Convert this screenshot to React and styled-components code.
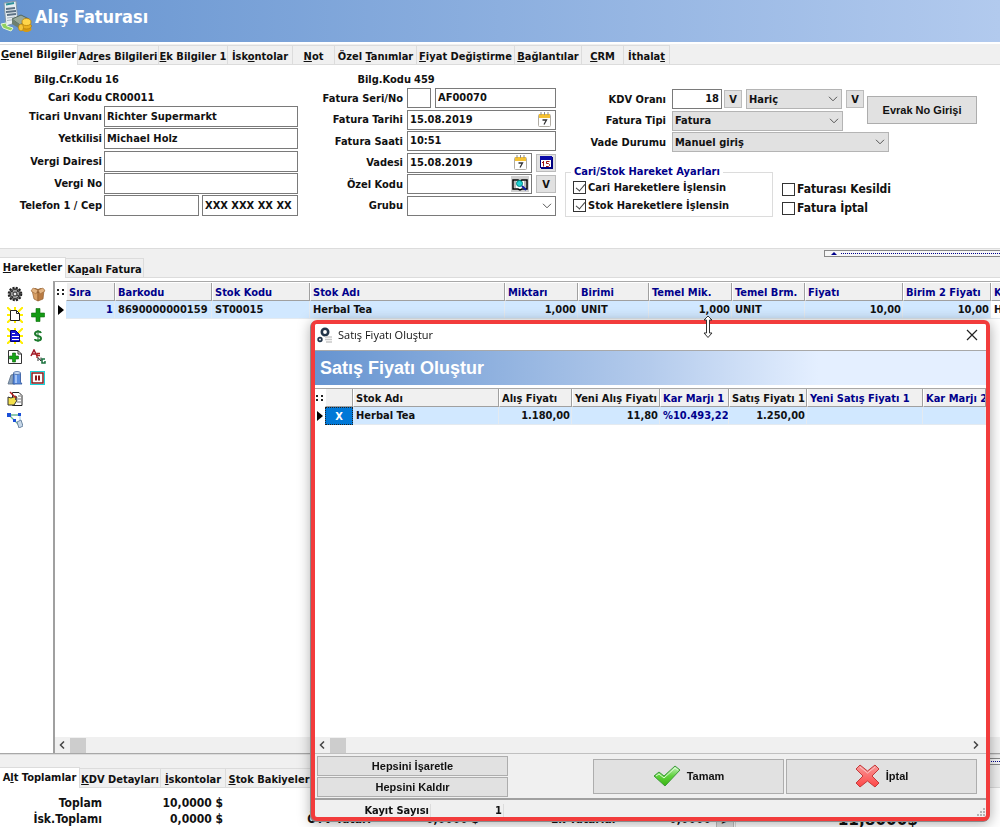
// Purchase invoice screen with the sale price dialog
import React, { useState } from "react";
import styled, { createGlobalStyle } from "styled-components";

const GlobalStyle = createGlobalStyle`
  * {
    box-sizing: border-box;
  }

  body {
    margin: 0;
    background: #f0f0f0;
  }

  body,
  button,
  input,
  select {
    font-family: "DejaVu Sans Condensed", "DejaVu Sans", sans-serif;
    font-size: 11px;
    font-weight: bold;
    color: #111;
  }
`;

const Shell = styled.div`
  display: flex;
  flex-direction: column;
  height: 100vh;
  overflow: hidden;
`;

const Header = styled.header`
  display: flex;
  align-items: flex-start;
  flex: 0 0 44px;
  gap: 2px;
  background: linear-gradient(to right, #6694d0, #b2caee);
  border-bottom: 2px solid #fff;
`;

const PageTitle = styled.h1`
  margin: 0;
  font-size: 18px;
  line-height: 34px;
  color: #fff;
`;

const TabBar = styled.div`
  display: flex;
  align-items: flex-end;
  flex: 0 0 auto;
  height: 21px;
  background: #f0f0f0;
  border-bottom: 1px solid #dcdcdc;
`;

const TabButton = styled.button`
  width: ${(props) => props.$width}px;
  height: ${(props) => (props.$active ? 21 : 19)}px;
  margin-bottom: ${(props) => (props.$active ? -1 : 0)}px;
  padding: ${(props) => (props.$active ? "0 0 1px" : "2px 0 0")};
  border: 1px solid #dcdcdc;
  border-width: 1px 1px 0 0;
  background: ${(props) => (props.$active ? "#fff" : "#f0f0f0")};
  white-space: nowrap;
  display: flex;
  justify-content: center;
  align-items: center;

  u {
    text-underline-offset: 1px;
  }
`;

const FormPanel = styled.section`
  display: flex;
  align-items: flex-start;
  flex: 0 0 183px;
  padding-top: 5px;
  background: #fff;
`;

const FieldColumn = styled.div`
  display: flex;
  flex-direction: column;
  width: ${(props) => props.$width}px;
`;

const FieldStack = styled.div`
  display: flex;
  flex-direction: column;
  justify-content: space-between;
  height: ${(props) => props.$height}px;
`;

const FieldRow = styled.div`
  display: grid;
  grid-template-columns: ${(props) => props.$label}px auto;
  column-gap: ${(props) => props.$gap || 3}px;
  align-items: center;
  min-height: 18px;
`;

const FieldLabel = styled.label`
  text-align: right;
  white-space: nowrap;
`;

const Controls = styled.div`
  display: flex;
  align-items: center;
  gap: ${(props) => props.$gap || 4}px;
`;

const TextBox = styled.input`
  width: ${(props) => props.$width}px;
  height: ${(props) => props.$height || 20}px;
  padding: 0 2px 1px;
  border: 1px solid #7a7a7a;
  border-radius: 0;
  background: #fff;
  text-align: ${(props) => props.$align || "left"};
  outline: none;
`;

const IconField = styled.div`
  display: flex;
  align-items: center;
  width: ${(props) => props.$width}px;
  height: 20px;
  padding-right: 2px;
  border: 1px solid #7a7a7a;
  background: #fff;

  input {
    flex: 1;
    min-width: 0;
    padding: 0 2px 1px;
    border: none;
    background: none;
    outline: none;
  }
`;

const IconButton = styled.button`
  display: flex;
  align-items: center;
  justify-content: center;
  width: 18px;
  height: 16px;
  padding: 0;
  border: none;
  background: ${(props) => (props.$filled ? "#d0d0d0" : "none")};
`;

const SmallButton = styled.button`
  display: flex;
  align-items: center;
  justify-content: center;
  width: ${(props) => props.$width || 18}px;
  height: 18px;
  padding: 0;
  border: 1px solid #bcbcbc;
  background: #e1e1e1;
`;

const SelectWrap = styled.div`
  position: relative;
  width: ${(props) => props.$width}px;
  height: 20px;

  select {
    width: 100%;
    height: 100%;
    padding: 0 2px;
    appearance: none;
    border: 1px solid ${(props) => (props.$light ? "#7a7a7a" : "#b4b4b4")};
    border-radius: 0;
    background: ${(props) => (props.$light ? "#fff" : "#e1e1e1")};
    outline: none;
  }

  svg {
    position: absolute;
    right: 4px;
    top: 7px;
    pointer-events: none;
  }
`;

const OptionsColumn = styled.div`
  display: flex;
  flex-direction: column;
  gap: 14px;
  padding-top: 19px;
  margin-left: 9px;
`;

const DocArea = styled.div`
  margin-left: -24px;
  padding-top: 26px;
`;

const DocButton = styled.button`
  width: 110px;
  height: 28px;
  padding: 0;
  border: 1px solid #adadad;
  background: #e1e1e1;
  font-family: "Liberation Sans", Arial, sans-serif;
`;

const CheckArea = styled.div`
  display: flex;
  gap: 9px;
`;

const CheckGroup = styled.fieldset`
  display: flex;
  flex-direction: column;
  gap: 4px;
  width: 208px;
  margin: 0;
  padding: 2px 7px 4px;
  border: 1px solid #dcdcdc;

  legend {
    margin-left: -2px;
    padding: 0 3px;
    color: #00008b;
    line-height: 12px;
  }
`;

const LooseChecks = styled.div`
  display: flex;
  flex-direction: column;
  gap: 5px;
  padding-top: 16px;
`;

const CheckLabel = styled.label`
  display: flex;
  align-items: center;
  gap: 2px;
  height: 14px;
  font-size: ${(props) => (props.$large ? 12 : 11)}px;
  white-space: nowrap;

  input {
    position: relative;
    width: 13px;
    height: 13px;
    margin: 0;
    appearance: none;
    border: 1px solid #333;
    background: #fff;
  }

  input:checked::after {
    content: "";
    position: absolute;
    left: 4px;
    top: 0;
    width: 4px;
    height: 8px;
    border: solid #444;
    border-width: 0 1px 1px 0;
    transform: rotate(40deg);
  }
`;

const SplitBar = styled.div`
  display: flex;
  justify-content: flex-end;
  flex: 0 0 ${(props) => props.$height}px;
  padding-top: ${(props) => props.$top}px;
  background: #f0f0f0;
  border-top: 1px solid #dcdcdc;
`;

const SplitHandle = styled.div`
  display: flex;
  align-items: center;
  gap: 4px;
  width: 176px;
  height: 7px;
  padding-left: 6px;
  border: 1px solid #888;
  border-right: none;
  background: #f6f6f6;

  &::before {
    content: "";
    border: 3px solid transparent;
    border-top: none;
    border-bottom-color: #00008b;
  }

  &::after {
    content: "";
    flex: 1;
    border-top: 1px dotted #00008b;
  }
`;

const WorkArea = styled.main`
  display: flex;
  flex: 1;
  min-height: 0;
  padding-top: 3px;
  background: #fff;
  border-bottom: 1px solid #a8a8a8;
`;

const ToolPalette = styled.div`
  display: grid;
  grid-template-columns: 16px 16px;
  grid-auto-rows: 16px;
  grid-auto-flow: row;
  align-content: start;
  gap: 5px 7px;
  flex: 0 0 53px;
  padding: 5px 0 0 7px;
`;

const ToolButton = styled.button`
  grid-column: ${(props) => props.$col};
  display: flex;
  width: 16px;
  height: 16px;
  padding: 0;
  border: none;
  background: none;
`;

const GridPane = styled.div`
  display: flex;
  flex-direction: column;
  flex: 1;
  min-width: 0;
  padding-top: ${(props) => (props.$framed ? 1 : 0)}px;
  border-top: 1px solid #a8a8a8;
  border-left: ${(props) => (props.$framed ? "2px solid #a0a0a0" : "none")};
  background: #fff;
`;

const GridScroll = styled.div`
  flex: 1;
  min-height: 0;
  overflow: hidden;
`;

const DataTable = styled.table`
  width: 100%;
  min-width: ${(props) => props.$minWidth}px;
  table-layout: fixed;
  border-collapse: separate;
  border-spacing: 0;
`;

const HeadCell = styled.th`
  height: 18px;
  padding: 1px 2px 0;
  overflow: hidden;
  background: #f0f0f0;
  border-right: 1px solid #a0a0a0;
  border-bottom: 1px solid #a0a0a0;
  border-left: 1px solid #fff;
  color: ${(props) => (props.$navy ? "#00008b" : "#111")};
  text-align: left;
  white-space: nowrap;
`;

const MarkerCell = styled.td`
  height: 18px;
  padding: 0;
  background: #fff;
  line-height: 0;
  text-align: center;
`;

const BodyCell = styled.td`
  height: 18px;
  padding: 0 1px 0 3px;
  overflow: hidden;
  background: ${(props) => (props.$plain ? "#fff" : "#d1e8ff")};
  border-right: 1px solid #e4eaf0;
  border-bottom: 1px solid #e4eaf0;
  color: ${(props) => (props.$navy ? "#00008b" : "#111")};
  text-align: ${(props) => props.$align || "left"};
  white-space: nowrap;
`;

const MarkCell = styled(BodyCell)`
  padding: 0;
  background: #0078d7;
  border: 1px dotted #222;
  color: #fff;
  text-align: center;
`;

const ScrollBar = styled.div`
  display: flex;
  align-items: center;
  flex: 0 0 16px;
  padding: 0 7px 0 4px;
  background: #f0f0f0;
`;

const ScrollThumb = styled.div`
  width: 16px;
  height: 15px;
  margin: 0 auto 0 5px;
  background: #cdcdcd;
`;

const Footer = styled.footer`
  display: flex;
  flex-direction: column;
  flex: 0 0 73px;
  overflow: hidden;
`;

const Totals = styled.div`
  display: grid;
  grid-template-columns: 102px 121px 148px 108px 138px 94px 24px 1fr;
  grid-auto-rows: 16px;
  flex: 1;
  padding-top: 7px;
  background: #fff;
  font-size: 12px;
  line-height: 16px;
  text-align: right;
  white-space: nowrap;
`;

const TotalValue = styled.output`
  grid-column: ${(props) => props.$col};
`;

const TotalName = styled.span`
  grid-column: ${(props) => props.$col};
`;

const MoreButton = styled(SmallButton)`
  margin-left: 5px;
`;

const GrandTotal = styled.output`
  padding-right: 82px;
  border-left: 1px solid #dcdcdc;
  font-size: 17px;
  line-height: 16px;
`;

const Dialog = styled.div`
  position: fixed;
  left: 311px;
  right: 10px;
  top: 320px;
  bottom: 6px;
  display: flex;
  flex-direction: column;
  overflow: hidden;
  border: 4px solid #f23c3c;
  border-radius: 6px;
  background: #f0f0f0;
  box-shadow: -1px 1px 0 #8a8a8a, 0 2px 14px rgba(0, 0, 0, 0.35);
`;

const DialogTitle = styled.div`
  display: flex;
  align-items: center;
  flex: 0 0 27px;
  gap: 5px;
  padding: 0 8px 5px 2px;
  background: #fff;
  border-bottom: 1px solid #a8a8a8;
  font-family: "Open Sans", "Noto Sans", sans-serif;
  font-weight: normal;
  font-size: 11px;
`;

const CloseButton = styled.button`
  display: flex;
  margin-left: auto;
  padding: 0;
  border: none;
  background: none;
`;

const Banner = styled.h2`
  flex: 0 0 36px;
  margin: 0;
  padding-left: 5px;
  background: linear-gradient(to right, #6694d0, #b4cbec 50%, #e4efff 75%);
  border-bottom: 3px solid #fff;
  color: #fff;
  font-family: "Liberation Sans", Arial, sans-serif;
  font-size: 18px;
  line-height: 34px;
`;

const ActionBar = styled.div`
  display: flex;
  align-items: center;
  justify-content: space-between;
  flex: 0 0 47px;
  padding: 0 9px 0 2px;
  border-top: 1px solid #c0c0c0;
  border-bottom: 2px solid #a0a0a0;
`;

const ButtonStack = styled.div`
  display: flex;
  flex-direction: column;
  gap: 1px;
`;

const ButtonPair = styled.div`
  display: flex;
  gap: 2px;
`;

const PushButton = styled.button`
  display: flex;
  align-items: center;
  justify-content: center;
  gap: 6px;
  width: 191px;
  height: ${(props) => props.$height}px;
  padding: 0;
  border: 1px solid #adadad;
  background: #e1e1e1;
  font-family: "Liberation Sans", Arial, sans-serif;
`;

const StatusBar = styled.div`
  display: flex;
  align-items: flex-end;
  flex: 0 0 17px;
`;

const StatusCell = styled.div`
  width: ${(props) => props.$width}px;
  padding-right: 1px;
  border-right: 1px solid #dcdcdc;
  line-height: 13px;
  text-align: right;
`;

const Grip = styled.svg`
  margin-left: auto;
`;

const ResizeCursor = styled.svg`
  position: fixed;
  left: 702px;
  top: 315px;
`;

const Chevron = () => (
  <svg width="10" height="6" viewBox="0 0 10 6" fill="none" stroke="#555">
    <path d="M1 .8 5 4.8 9 .8" />
  </svg>
);

const CalendarIcon = () => (
  <svg width="13" height="15" viewBox="0 0 13 15">
    <rect x=".5" y="2.5" width="12" height="12" rx="1" fill="#fff" stroke="#b0aca4" />
    <path d="M1 2h11v4H1z" fill="#f5c132" />
    <path d="M3 0v3M6.500 0v3M10 0v3" stroke="#8a8a8a" />
    <path d="M4.500 8h4L6 12.500" fill="none" stroke="#333" strokeWidth="1.300" />
  </svg>
);

const DueIcon = () => (
  <svg width="13" height="13" viewBox="0 0 13 13">
    <path d="M1 1h12v12H1z" fill="#000080" />
    <rect x=".5" y=".5" width="11" height="11" fill="#fff" stroke="#000080" />
    <path d="M0 0h12v4H0z" fill="#0a0aa8" />
    <path d="M3.500 5v5.500M2 6.500h1.500M9.500 5.500H6.500v2h2l1 1v1l-1 1H6" fill="none" stroke="#a01010" />
  </svg>
);

const LookupIcon = () => (
  <svg width="16" height="13" viewBox="0 0 16 13">
    <path d="M1 2h5l2 1 2-1h5v9h-5l-2 1-2-1H1z" fill="#fff" stroke="#000" strokeWidth="1.500" />
    <path d="M3 3v7M13 3v7" stroke="#777" />
    <circle cx="7.500" cy="5.500" r="3" fill="#1fd0d8" stroke="#087" />
    <path d="m10 8 4 4" stroke="#1020a0" strokeWidth="2" />
  </svg>
);

const InvoiceLogo = () => (
  <svg width="33" height="33" viewBox="0 0 33 33">
    <path d="m4 3 12-2 2 21-12 4z" fill="#e6eef2" stroke="#8397a8" />
    <path d="m6 4.500 8-1.500" stroke="#2d8f9a" strokeWidth="2" />
    <path d="m6 9 9-1M6 12l10-1M7 15l9-1" stroke="#5c7184" strokeWidth="2" />
    <path d="m7 18 8-1M7 20.500l8-1" stroke="#a7b4bd" />
    <path d="m12 19 9-4 8 4-9 6z" fill="#98a99a" stroke="#53665a" />
    <path d="m12 19 8 6v4l-8-5z" fill="#6c8070" />
    <path d="m1 24 5-1 1 3 6 2-2 3-8-3z" fill="#8fd160" stroke="#e6f7d6" />
    <ellipse cx="26.500" cy="29" rx="5" ry="3" fill="#d89a10" />
    <ellipse cx="26.500" cy="26" rx="5" ry="3" fill="#eab020" stroke="#a87508" strokeWidth=".6" />
    <ellipse cx="26.500" cy="22" rx="4.500" ry="3.500" fill="#ffd54a" stroke="#b98308" strokeWidth=".8" />
    <ellipse cx="21" cy="27.500" rx="2.500" ry="3.500" fill="#f5c438" stroke="#a87508" strokeWidth=".6" />
  </svg>
);

const GearsIcon = () => (
  <svg width="16" height="16" viewBox="0 0 16 16">
    <circle cx="8" cy="5" r="3.200" fill="none" stroke="#22354a" strokeWidth="2.600" />
    <circle cx="3" cy="12.500" r="1.800" fill="none" stroke="#22354a" strokeWidth="1.800" />
    <path d="M8 10h7M8 12.500h7M9 15h6" stroke="#c9c9c9" strokeWidth="1.500" />
  </svg>
);

const CheckIcon = () => (
  <svg width="28" height="22" viewBox="0 0 28 22">
    <defs>
      <linearGradient id="okFill" x1="0" y1="0" x2="0" y2="1">
        <stop offset="0" stopColor="#c9f3c4" />
        <stop offset=".5" stopColor="#5fd23c" />
        <stop offset="1" stopColor="#39b410" />
      </linearGradient>
    </defs>
    <path d="m1 11 5-4 5 4L22 1l5 4-15 16z" fill="url(#okFill)" stroke="#3d9b3a" strokeLinejoin="round" />
    <path d="m3 11 3-2 5 4L22 3l3 2" fill="none" stroke="#dcfad2" />
  </svg>
);

const CancelIcon = () => (
  <svg width="25" height="24" viewBox="0 0 25 24">
    <defs>
      <linearGradient id="noFill" x1="0" y1="0" x2="0" y2="1">
        <stop offset="0" stopColor="#f79a9a" />
        <stop offset="1" stopColor="#ff4545" />
      </linearGradient>
    </defs>
    <path
      d="m5 1 7.500 6L20 1l4 4-7 7 7 7-4 4-7.500-6L5 23l-4-4 7-7-7-7z"
      fill="url(#noFill)"
      stroke="#c43a3a"
      strokeLinejoin="round"
    />
    <path d="m5 3 7.500 6L20 3" fill="none" stroke="#fcc4c4" />
  </svg>
);

const SunRays = () => (
  <path
    d="M0 0l5 5M16 0l-5 5M0 16l5-5M16 16l-5-5M0 8h4M16 8h-4M8 0v3M8 16v-2"
    stroke="#ffee00"
    strokeWidth="2"
  />
);

const toolDrawings = {
  gear: (
    <>
      <circle cx="8" cy="8" r="6.300" fill="#777" stroke="#222" strokeWidth="2" strokeDasharray="2 1.300" />
      <circle cx="8" cy="8" r="4.500" fill="#a9a9a9" stroke="#333" />
      <circle cx="8" cy="8" r="2" fill="#eee" stroke="#222" />
      <path d="m4 5 2 1M11 4l-1 2M12 10l-2-1M5 12l1-2" stroke="#222" />
    </>
  ),
  box: (
    <>
      <path d="m2 4 6 2v9l-4-2z" fill="#d9a066" stroke="#94602f" strokeWidth=".7" />
      <path d="m14 4-6 2v9l5-2z" fill="#b97b43" stroke="#94602f" strokeWidth=".7" />
      <path d="m2 4 3-2 3 1 3-1 4 2-7 3z" fill="#8e5a2b" />
      <path d="m1 5 2-3 5 2-2 4zM15 5l-2-3-5 2 2 4z" fill="#e3b482" stroke="#a06c3a" strokeWidth=".6" />
    </>
  ),
  newPage: (
    <>
      <SunRays />
      <path d="M3.500 3.500h6l3 3v7h-9z" fill="#fff" stroke="#222" />
      <path d="M9.500 3.500v3h3" fill="none" stroke="#222" />
    </>
  ),
  plus: <path d="M6 1.500h4V6h4.500v4H10v4.500H6V10H1.500V6H6z" fill="#149a14" stroke="#0a6d0a" strokeWidth=".6" />,
  bluePage: (
    <>
      <SunRays />
      <path d="M3.500 2.500h5l4 4v7h-9z" fill="#1818d8" stroke="#000070" />
      <path d="M5 5.500h3M5 8.500h7M5 11.500h7" stroke="#fff" />
    </>
  ),
  dollar: (
    <>
      <path
        d="M11 5Q10.500 3.500 8 3.500T5 5.500Q5 7.500 8 8t3 2.500Q11 12.500 8 12.500T5 11"
        fill="none"
        stroke="#1c7a2c"
        strokeWidth="2"
      />
      <path d="M8 2v12" stroke="#1c7a2c" />
    </>
  ),
  addPage: (
    <>
      <path d="M1.500 1.500H11L14.500 5v9.500h-13z" fill="#fff" stroke="#333" />
      <path d="M11 1.500V5h3.500" fill="none" stroke="#333" />
      <path d="M5.500 4h3v3h3v3h-3v3h-3v-3h-3V7h3z" fill="#16a516" stroke="#0a600a" strokeWidth=".6" />
    </>
  ),
  letters: (
    <>
      <path d="m1 7 3-6 3 6M2 5h4" fill="none" stroke="#a01828" strokeWidth="1.500" />
      <path d="M7 9V4.500h3M7 6.500h3" fill="none" stroke="#b02020" strokeWidth="1.300" />
      <path d="M8 12V8.500l3 3.500V8.500" fill="none" stroke="#303030" />
      <path d="M15 10h-3v4h3v-2" fill="none" stroke="#18703c" strokeWidth="1.500" />
    </>
  ),
  barrel: (
    <>
      <path d="m1 14 3-9 4-1v10z" fill="#8ea2b8" stroke="#5c6f85" strokeWidth=".8" />
      <path d="M6.500 3h7v9l1.500 2H6z" fill="#5d8fe0" stroke="#2d539b" strokeWidth=".8" />
      <ellipse cx="10" cy="3" rx="3.500" ry="1.500" fill="#cfe0f7" stroke="#4868a0" strokeWidth=".8" />
      <path d="M9 5v8" stroke="#bdd5fb" strokeWidth="1.500" />
    </>
  ),
  pause: (
    <>
      <rect x=".5" y="1.500" width="14" height="13" fill="#fff" stroke="#19d3dc" />
      <rect x="2" y="3" width="11" height="10" fill="#fff" stroke="#8b1a1a" strokeWidth="1.500" />
      <path d="M6 5.500v5M9 5.500v5" stroke="#8b1a1a" strokeWidth="2" />
    </>
  ),
  edit: (
    <>
      <path d="M5.500 1.500H12l3 3v10H5.500z" fill="#fff" stroke="#222" />
      <path d="M11 5h3M10 8h4M10 11h4" stroke="#777" />
      <path d="m1 6 3 1 5-2 1 2-2 1 2 1-1 2-2 3H1z" fill="#f3e04c" stroke="#333" />
      <path d="m3 1 6 6" stroke="#b82020" strokeWidth="1.500" />
    </>
  ),
  nodes: (
    <>
      <path d="M2 3h11M2 3l10 10" fill="none" stroke="#69b993" strokeWidth="1.300" />
      <path d="M13 3v6" stroke="#9ccbe8" />
      <path d="M0 1h4v4H0zM11 1h3v3h-3zM6 7h3v3H6z" fill="#1a4fd8" />
      <path d="m10 10 4-2 2 6-4 2z" fill="#c7d7e8" stroke="#6d87a3" />
    </>
  ),
};

const tools = [
  { icon: "gear", name: "Ayarlar", col: 1 },
  { icon: "box", name: "Stok", col: 2 },
  { icon: "newPage", name: "Yeni", col: 1 },
  { icon: "plus", name: "Ekle", col: 2 },
  { icon: "bluePage", name: "Liste", col: 1 },
  { icon: "dollar", name: "Fiyat", col: 2 },
  { icon: "addPage", name: "Sayfa Ekle", col: 1 },
  { icon: "letters", name: "Yazı", col: 2 },
  { icon: "barrel", name: "Depo", col: 1 },
  { icon: "pause", name: "Beklet", col: 2 },
  { icon: "edit", name: "Düzenle", col: 1 },
  { icon: "nodes", name: "Hareket", col: 1 },
];

// "_" stands before the shortcut letter
const mainTabs = [
  ["_Genel Bilgiler", 78],
  ["Ad_res Bilgileri", 81],
  ["_Ek Bilgiler 1", 69],
  ["İsk_ontolar", 65],
  ["_Not", 42],
  ["Özel _Tanımlar", 82],
  ["_Fiyat Değiştirme", 98],
  ["_Bağlantılar", 67],
  ["_CRM", 42],
  ["İthala_t", 46],
];

const movementTabs = [
  ["_Hareketler", 66],
  ["Ka_palı Fatura", 78],
];

const totalTabs = [
  ["A_lt Toplamlar", 80],
  ["_KDV Detayları", 81],
  ["_İskontolar", 65],
  ["_Stok Bakiyeler", 87],
];

const lineColumns = [
  { title: "Sıra", width: 49, value: "1", align: "right", navy: true },
  { title: "Barkodu", width: 97, value: "8690000000159" },
  { title: "Stok Kodu", width: 98, value: "ST00015" },
  { title: "Stok Adı", width: 195, value: "Herbal Tea" },
  { title: "Miktarı", width: 73, value: "1,000", align: "right" },
  { title: "Birimi", width: 71, value: "UNIT" },
  { title: "Temel Mik.", width: 83, value: "1,000", align: "right" },
  { title: "Temel Brm.", width: 73, value: "UNIT" },
  { title: "Fiyatı", width: 98, value: "10,00", align: "right" },
  { title: "Birim 2 Fiyatı", width: 88, value: "10,00", align: "right" },
  { title: "KDV", value: "Hariç", plain: true },
];

const priceColumns = [
  { title: "", width: 28, value: "X", mark: true },
  { title: "Stok Adı", width: 146, value: "Herbal Tea" },
  { title: "Alış Fiyatı", width: 73, value: "1.180,00", align: "right" },
  { title: "Yeni Alış Fiyatı", width: 88, value: "11,80", align: "right" },
  { title: "Kar Marjı 1", width: 69, value: "%10.493,22", align: "right", navy: true },
  { title: "Satış Fiyatı 1", width: 78, value: "1.250,00", align: "right" },
  { title: "Yeni Satış Fiyatı 1", width: 116, value: "", navy: true },
  { title: "Kar Marjı 2", value: "", navy: true },
];

const Mnemonic = ({ text }) => {
  const at = text.indexOf("_");
  return (
    <span>
      {text.slice(0, at)}
      <u>{text[at + 1]}</u>
      {text.slice(at + 2)}
    </span>
  );
};

const Tabs = ({ items }) => {
  const [active, setActive] = useState(0);

  return (
    <TabBar role="tablist">
      {items.map(([text, width], index) => (
        <TabButton
          key={text}
          role="tab"
          aria-selected={index === active}
          $width={width}
          $active={index === active}
          onClick={() => setActive(index)}
        >
          <Mnemonic text={text} />
        </TabButton>
      ))}
    </TabBar>
  );
};

const Select = ({ id, width, value, light, label }) => (
  <SelectWrap $width={width} $light={light}>
    <select id={id} aria-label={label} defaultValue={value}>
      <option>{value}</option>
    </select>
    <Chevron />
  </SelectWrap>
);

const RecordGrid = ({ columns, markerWidth, minWidth, navyHeads }) => (
  <DataTable $minWidth={minWidth}>
    <colgroup>
      <col width={markerWidth} />
      {columns.map((column) => (
        <col key={column.title} width={column.width} />
      ))}
    </colgroup>
    <thead>
      <tr>
        <MarkerCell>
          <svg width="8" height="8" viewBox="0 0 8 8" fill="#222">
            <path d="M0 1h2v2H0zM5 1h2v2H5zM0 5h2v2H0zM5 5h2v2H5z" />
          </svg>
        </MarkerCell>
        {columns.map((column) => (
          <HeadCell key={column.title} $navy={navyHeads || column.navy}>
            {column.title}
          </HeadCell>
        ))}
      </tr>
    </thead>
    <tbody>
      <tr>
        <MarkerCell>
          <svg width="6" height="10" viewBox="0 0 6 10">
            <path d="M0 0v10l6-5z" />
          </svg>
        </MarkerCell>
        {columns.map((column) =>
          column.mark ? (
            <MarkCell key={column.title}>{column.value}</MarkCell>
          ) : (
            <BodyCell
              key={column.title}
              $align={column.align}
              $navy={column.navy}
              $plain={column.plain}
            >
              {column.value}
            </BodyCell>
          )
        )}
      </tr>
    </tbody>
  </DataTable>
);

const HorizontalScroll = ({ both }) => (
  <ScrollBar>
    <svg width="6" height="8" viewBox="0 0 6 8" fill="none" stroke="#444" strokeWidth="1.500">
      <path d="M5 .500 1.500 4 5 7.500" />
    </svg>
    <ScrollThumb />
    {both && (
      <svg width="6" height="8" viewBox="0 0 6 8" fill="none" stroke="#444" strokeWidth="1.500">
        <path d="M1 .500 4.500 4 1 7.500" />
      </svg>
    )}
  </ScrollBar>
);

const CustomerFields = () => (
  <FieldColumn $width={310}>
    <FieldRow $label={102}>
      <FieldLabel as="span">Bilg.Cr.Kodu</FieldLabel>
      <span>16</span>
    </FieldRow>
    <FieldRow $label={102}>
      <FieldLabel as="span">Cari Kodu</FieldLabel>
      <span>CR00011</span>
    </FieldRow>
    <FieldStack $height={110}>
      <FieldRow $label={102} $gap={2}>
        <FieldLabel htmlFor="company">Ticari Unvanı</FieldLabel>
        <TextBox id="company" $width={194} $height={21} defaultValue="Richter Supermarkt" />
      </FieldRow>
      <FieldRow $label={102} $gap={2}>
        <FieldLabel htmlFor="contact">Yetkilisi</FieldLabel>
        <TextBox id="contact" $width={194} $height={21} defaultValue="Michael Holz" />
      </FieldRow>
      <FieldRow $label={102} $gap={2}>
        <FieldLabel htmlFor="taxOffice">Vergi Dairesi</FieldLabel>
        <TextBox id="taxOffice" $width={194} $height={21} />
      </FieldRow>
      <FieldRow $label={102} $gap={2}>
        <FieldLabel htmlFor="taxNo">Vergi No</FieldLabel>
        <TextBox id="taxNo" $width={194} $height={21} />
      </FieldRow>
      <FieldRow $label={102} $gap={2}>
        <FieldLabel htmlFor="phone">Telefon 1 / Cep</FieldLabel>
        <Controls $gap={3}>
          <TextBox id="phone" $width={95} $height={21} />
          <TextBox aria-label="Cep" $width={96} $height={21} defaultValue="XXX XXX XX XX" />
        </Controls>
      </FieldRow>
    </FieldStack>
  </FieldColumn>
);

const InvoiceFields = () => (
  <FieldColumn $width={246}>
    <FieldRow $label={101}>
      <FieldLabel as="span">Bilg.Kodu</FieldLabel>
      <span>459</span>
    </FieldRow>
    <FieldStack $height={128}>
      <FieldRow $label={93} $gap={4}>
        <FieldLabel htmlFor="serial">Fatura Seri/No</FieldLabel>
        <Controls>
          <TextBox id="serial" $width={24} />
          <TextBox aria-label="Fatura No" $width={121} defaultValue="AF00070" />
        </Controls>
      </FieldRow>
      <FieldRow $label={93} $gap={4}>
        <FieldLabel htmlFor="date">Fatura Tarihi</FieldLabel>
        <IconField $width={149}>
          <input id="date" defaultValue="15.08.2019" />
          <IconButton aria-label="Takvim">
            <CalendarIcon />
          </IconButton>
        </IconField>
      </FieldRow>
      <FieldRow $label={93} $gap={4}>
        <FieldLabel htmlFor="time">Fatura Saati</FieldLabel>
        <TextBox id="time" $width={149} defaultValue="10:51" />
      </FieldRow>
      <FieldRow $label={93} $gap={4}>
        <FieldLabel htmlFor="due">Vadesi</FieldLabel>
        <Controls>
          <IconField $width={125}>
            <input id="due" defaultValue="15.08.2019" />
            <IconButton aria-label="Takvim">
              <CalendarIcon />
            </IconButton>
          </IconField>
          <SmallButton $width={20} aria-label="Vade">
            <DueIcon />
          </SmallButton>
        </Controls>
      </FieldRow>
      <FieldRow $label={93} $gap={4}>
        <FieldLabel htmlFor="special">Özel Kodu</FieldLabel>
        <Controls>
          <IconField $width={125}>
            <input id="special" />
            <IconButton $filled aria-label="Ara">
              <LookupIcon />
            </IconButton>
          </IconField>
          <SmallButton $width={20}>V</SmallButton>
        </Controls>
      </FieldRow>
      <FieldRow $label={93} $gap={4}>
        <FieldLabel htmlFor="group">Grubu</FieldLabel>
        <Select id="group" width={149} value="" light />
      </FieldRow>
    </FieldStack>
  </FieldColumn>
);

const InvoiceOptions = () => (
  <OptionsColumn>
    <FieldStack $height={63}>
      <FieldRow $label={101} $gap={6}>
        <FieldLabel htmlFor="vat">KDV Oranı</FieldLabel>
        <Controls>
          <Controls $gap={2}>
            <TextBox id="vat" $width={50} $align="right" defaultValue="18" />
            <SmallButton>V</SmallButton>
          </Controls>
          <Select label="KDV" width={96} value="Hariç" />
          <SmallButton>V</SmallButton>
        </Controls>
      </FieldRow>
      <FieldRow $label={101} $gap={6}>
        <FieldLabel htmlFor="kind">Fatura Tipi</FieldLabel>
        <Select id="kind" width={171} value="Fatura" />
      </FieldRow>
      <FieldRow $label={101} $gap={6}>
        <FieldLabel htmlFor="terms">Vade Durumu</FieldLabel>
        <Select id="terms" width={217} value="Manuel giriş" />
      </FieldRow>
    </FieldStack>
    <CheckArea>
      <CheckGroup>
        <legend>Cari/Stok Hareket Ayarları</legend>
        <CheckLabel>
          <input type="checkbox" defaultChecked />
          Cari Hareketlere İşlensin
        </CheckLabel>
        <CheckLabel>
          <input type="checkbox" defaultChecked />
          Stok Hareketlere İşlensin
        </CheckLabel>
      </CheckGroup>
      <LooseChecks>
        <CheckLabel $large>
          <input type="checkbox" />
          Faturası Kesildi
        </CheckLabel>
        <CheckLabel $large>
          <input type="checkbox" />
          Fatura İptal
        </CheckLabel>
      </LooseChecks>
    </CheckArea>
  </OptionsColumn>
);

const PriceDialog = () => (
  <Dialog role="dialog" aria-label="Satış Fiyatı Oluştur">
    <DialogTitle>
      <GearsIcon />
      Satış Fiyatı Oluştur
      <CloseButton aria-label="Kapat">
        <svg width="12" height="12" viewBox="0 0 12 12" stroke="#222" strokeWidth="1.200">
          <path d="m1 1 10 10M11 1 1 11" />
        </svg>
      </CloseButton>
    </DialogTitle>
    <Banner>Satış Fiyatı Oluştur</Banner>
    <GridPane>
      <GridScroll>
        <RecordGrid columns={priceColumns} markerWidth={10} />
      </GridScroll>
      <HorizontalScroll both />
    </GridPane>
    <ActionBar>
      <ButtonStack>
        <PushButton $height={20}>Hepsini İşaretle</PushButton>
        <PushButton $height={20}>Hepsini Kaldır</PushButton>
      </ButtonStack>
      <ButtonPair>
        <PushButton $height={35}>
          <CheckIcon />
          Tamam
        </PushButton>
        <PushButton $height={35}>
          <CancelIcon />
          İptal
        </PushButton>
      </ButtonPair>
    </ActionBar>
    <StatusBar>
      <StatusCell $width={116}>Kayıt Sayısı</StatusCell>
      <StatusCell $width={73}>1</StatusCell>
      <Grip width="10" height="10" viewBox="0 0 10 10" fill="#b4b4b4">
        <path d="M7 1h2v2H7zM4 4h2v2H4zM7 4h2v2H7zM1 7h2v2H1zM4 7h2v2H4zM7 7h2v2H7z" />
      </Grip>
    </StatusBar>
  </Dialog>
);

const App = () => {
  return (
    <Shell>
      <GlobalStyle />
      <Header>
        <InvoiceLogo />
        <PageTitle>Alış Faturası</PageTitle>
      </Header>
      <Tabs items={mainTabs} />
      <FormPanel>
        <CustomerFields />
        <InvoiceFields />
        <InvoiceOptions />
        <DocArea>
          <DocButton>Evrak No Girişi</DocButton>
        </DocArea>
      </FormPanel>
      <SplitBar $height={9} $top={1}>
        <SplitHandle />
      </SplitBar>
      <Tabs items={movementTabs} />
      <WorkArea>
        <ToolPalette>
          {tools.map((tool) => (
            <ToolButton key={tool.icon} $col={tool.col} aria-label={tool.name}>
              <svg width="16" height="16" viewBox="0 0 16 16">
                {toolDrawings[tool.icon]}
              </svg>
            </ToolButton>
          ))}
        </ToolPalette>
        <GridPane $framed>
          <GridScroll>
            <RecordGrid columns={lineColumns} markerWidth={11} minWidth={1020} navyHeads />
          </GridScroll>
          <HorizontalScroll />
        </GridPane>
      </WorkArea>
      <Footer>
        <SplitBar $height={13} $top={3}>
          <SplitHandle />
        </SplitBar>
        <Tabs items={totalTabs} />
        <Totals>
          <TotalName $col={1}>Toplam</TotalName>
          <TotalValue $col={2}>10,0000 $</TotalValue>
          <TotalName $col={1}>İsk.Toplamı</TotalName>
          <TotalValue $col={2}>0,0000 $</TotalValue>
          <TotalName $col={3}>ÖTV Tutarı</TotalName>
          <TotalValue $col={4}>0,0000 $</TotalValue>
          <TotalName $col={5}>Ek Tutarlar</TotalName>
          <TotalValue $col={6}>0,0000</TotalValue>
          <MoreButton aria-label="Ek Tutarlar">&gt;</MoreButton>
          <GrandTotal>11,8000$</GrandTotal>
        </Totals>
      </Footer>
      <PriceDialog />
      <ResizeCursor width="12" height="24" viewBox="0 0 12 24" fill="#fff" stroke="#333">
        <path d="m6 1 4 4H7.500v13H10l-4 4.500L2 18h2.500V5H2z" />
      </ResizeCursor>
    </Shell>
  );
};

export default App;
